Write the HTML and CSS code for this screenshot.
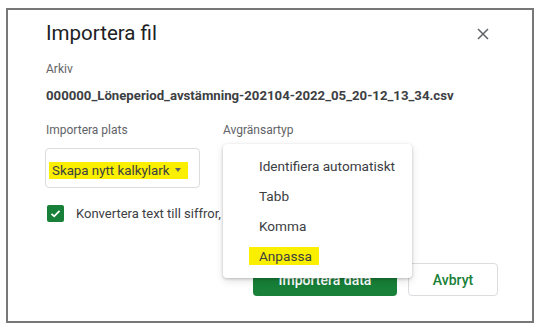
FILE: index.html
```html
<!DOCTYPE html>
<html lang="sv">
<head>
    <meta charset="UTF-8">
    <meta name="viewport" content="width=device-width, initial-scale=1.0">
    <title>Importera fil</title>
    <link rel="stylesheet" href="styles.css">
</head>
<body>
    <div class="dialog">
        <header class="dialog-head">
            <h1>Importera fil</h1>
            <button class="close" aria-label="Stäng">
                <svg width="12" height="12" viewBox="0 0 12 12">
                    <path d="M1 1L11 11M11 1L1 11" stroke="#5f6368" stroke-width="1.5" fill="none"/>
                </svg>
            </button>
        </header>
        <div class="label">Arkiv</div>
        <div class="filename">000000_Löneperiod_avstämning-202104-2022_05_20-12_13_34.csv</div>
        <div class="fields">
            <div class="field place">
                <div class="label">Importera plats</div>
                <div class="select">
                    <span class="mark">Skapa nytt kalkylark <span class="arrow"></span></span>
                </div>
            </div>
            <div class="field sep">
                <div class="label">Avgränsartyp</div>
                <ul class="menu">
                    <li>Identifiera automatiskt</li>
                    <li>Tabb</li>
                    <li>Komma</li>
                    <li><span class="mark">Anpassa</span></li>
                </ul>
            </div>
        </div>
        <label class="check">
            <span class="box">
                <svg width="13" height="13" viewBox="0 0 13 13">
                    <path d="M2.5 6.8L5.2 9.3L10.5 3.8" stroke="#fff" stroke-width="1.8" fill="none"/>
                </svg>
            </span>
            <span>Konvertera text till siffror, datum och formler</span>
        </label>
        <div class="actions">
            <button class="primary">Importera data</button>
            <button class="secondary">Avbryt</button>
        </div>
    </div>
</body>
</html>
```

FILE: styles.css
```css
body {
    margin: 0;
    background-color: white;
    font-family: Roboto, Arial, sans-serif;
    color: #3c4043;
}
.dialog {
    box-sizing: border-box;
    width: 528px;
    height: 315px;
    margin: 8px 0 0 6px;
    padding: 9px 34px 0 38px;
    border: 2px solid #777;
    background-color: white;
}
.dialog-head {
    display: flex;
    justify-content: space-between;
    align-items: center;
}
.dialog-head h1 {
    margin: 0;
    font-size: 20.5px;
    line-height: 28px;
    font-weight: 400;
    color: #202124;
}
.close {
    border: none;
    background: none;
    padding: 0;
    margin-right: 9px;
    margin-top: 2px;
    width: 12px;
    height: 12px;
    display: flex;
}
.label {
    margin-top: 14px;
    font-size: 12px;
    line-height: 16px;
    color: #5f6368;
}
.filename {
    margin-top: 9px;
    font-size: 13.2px;
    line-height: 20px;
    font-weight: 700;
    color: #3c4043;
}
.fields {
    display: flex;
    margin-top: 16px;
}
.fields .label {
    margin-top: 0;
}
.place {
    width: 177px;
}
.sep {
    position: relative;
}
.select {
    box-sizing: border-box;
    width: 155px;
    height: 40px;
    margin-top: 10px;
    margin-left: -1px;
    padding: 4px 0 0 3px;
    border: 1px solid #dadce0;
    border-radius: 4px;
    display: flex;
    align-items: center;
}
.mark {
    background-color: #fbef00;
    color: #3c4043;
}
.select .mark {
    display: inline-flex;
    align-items: center;
    gap: 6px;
    height: 17px;
    padding: 0 7px 0 3px;
    font-size: 13.3px;
}
.arrow {
    width: 0;
    height: 0;
    border-left: 3.5px solid transparent;
    border-right: 3.5px solid transparent;
    border-top: 4px solid #5f6368;
}
.menu {
    position: absolute;
    left: 0;
    top: 22px;
    z-index: 2;
    box-sizing: border-box;
    width: 189px;
    margin: 0;
    padding: 7px 0;
    list-style: none;
    background-color: white;
    border-radius: 4px;
    box-shadow: 0 1px 3px rgba(0, 0, 0, 0.2), 0 3px 8px rgba(0, 0, 0, 0.12);
}
.menu li {
    padding-left: 36px;
    font-size: 13.6px;
    line-height: 30px;
    color: #3c4043;
}
.menu .mark {
    display: inline-block;
    line-height: 18px;
    margin-left: -10px;
    padding: 0 7px 0 10px;
}
.check {
    display: flex;
    align-items: center;
    gap: 12px;
    margin-top: 17px;
    font-size: 13px;
    white-space: nowrap;
}
.box {
    flex: none;
    width: 17px;
    height: 17px;
    margin-left: 1px;
    border-radius: 2px;
    background-color: #188038;
    display: flex;
    align-items: center;
    justify-content: center;
}
.actions {
    display: flex;
    justify-content: flex-end;
    gap: 11px;
    margin-top: 41px;
}
.actions button {
    height: 33px;
    border-radius: 4px;
    font-family: Roboto, Arial, sans-serif;
    font-size: 14px;
    font-weight: 500;
}
.primary {
    width: 144px;
    border: none;
    background-color: #188038;
    color: white;
}
.secondary {
    width: 90px;
    border: 1px solid #dadce0;
    background-color: white;
    color: #188038;
}
```
